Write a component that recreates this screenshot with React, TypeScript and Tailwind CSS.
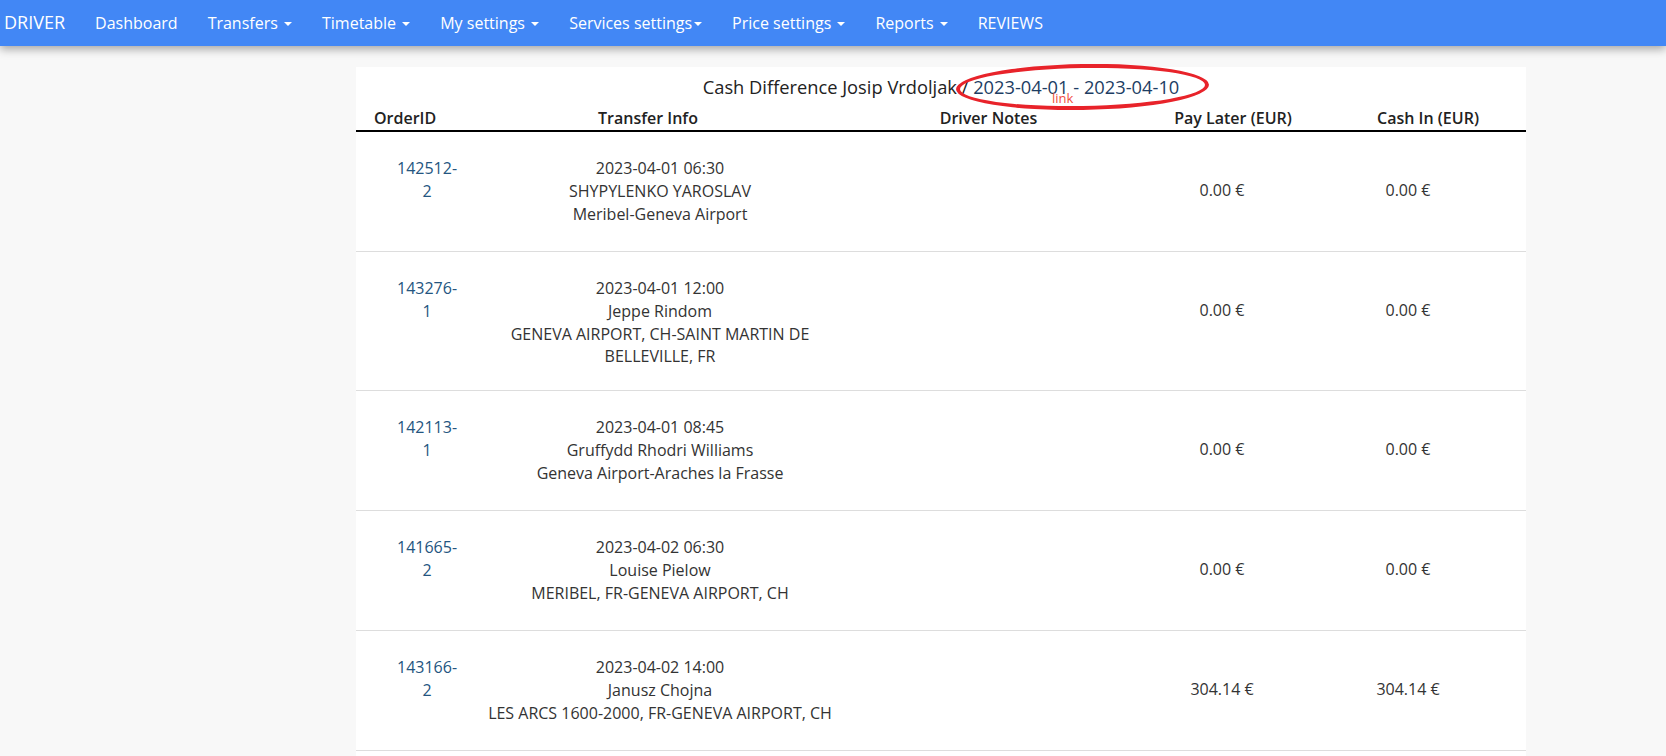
import React from "react";

interface NavItem {
    label: string;
    caret?: boolean;
    tight?: boolean;
}

interface TransferRow {
    id: string;
    part: string;
    date: string;
    name: string;
    route: string;
    payLater: string;
    cashIn: string;
}

const navItems: NavItem[] = [
    { label: "Dashboard" },
    { label: "Transfers", caret: true },
    { label: "Timetable", caret: true },
    { label: "My settings", caret: true },
    { label: "Services settings", caret: true, tight: true },
    { label: "Price settings", caret: true },
    { label: "Reports", caret: true },
    { label: "REVIEWS" },
];

const rows: TransferRow[] = [
    { id: "142512", part: "2", date: "2023-04-01 06:30", name: "SHYPYLENKO YAROSLAV", route: "Meribel-Geneva Airport", payLater: "0.00 €", cashIn: "0.00 €" },
    { id: "143276", part: "1", date: "2023-04-01 12:00", name: "Jeppe Rindom", route: "GENEVA AIRPORT, CH-SAINT MARTIN DE BELLEVILLE, FR", payLater: "0.00 €", cashIn: "0.00 €" },
    { id: "142113", part: "1", date: "2023-04-01 08:45", name: "Gruffydd Rhodri Williams", route: "Geneva Airport-Araches la Frasse", payLater: "0.00 €", cashIn: "0.00 €" },
    { id: "141665", part: "2", date: "2023-04-02 06:30", name: "Louise Pielow", route: "MERIBEL, FR-GENEVA AIRPORT, CH", payLater: "0.00 €", cashIn: "0.00 €" },
    { id: "143166", part: "2", date: "2023-04-02 14:00", name: "Janusz Chojna", route: "LES ARCS 1600-2000, FR-GENEVA AIRPORT, CH", payLater: "304.14 €", cashIn: "304.14 €" },
];

const Caret = () => (
    <span className="ml-[2px] inline-block h-0 w-0 border-x-4 border-t-4 border-x-transparent border-t-white align-middle" />
);

const Navbar = () => (
    <nav className="relative z-10 flex h-[46px] items-center bg-[#4287f5] text-[16px] text-white shadow-[0_3px_9px_rgba(0,0,0,0.35)]">
        <a className="pl-[4px] pr-[15px] text-[18px]">DRIVER</a>
        {navItems.map((item) => (
            <a key={item.label} className="px-[15px] whitespace-nowrap">
                {item.label}
                {item.caret && !item.tight && " "}
                {item.caret && <Caret />}
            </a>
        ))}
    </nav>
);

const Row = ({ row }: { row: TransferRow }) => (
    <div className="grid min-h-[120px] grid-cols-[119px_370px_287px_180px_192px] border-b border-[#dddddd]">
        <div className="pt-[25px] pb-[22px]">
            <a className="ml-[41px] block w-min text-center text-[#245580]">
                {row.id}-<wbr />
                {row.part}
            </a>
        </div>
        <div className="pt-[25px] pb-[22px] text-center">
            <div>{row.date}</div>
            <div>{row.name}</div>
            <div>{row.route}</div>
        </div>
        <div />
        <div className="pt-[47px] text-center">{row.payLater}</div>
        <div className="pt-[47px] text-center">{row.cashIn}</div>
    </div>
);

export default function App() {
    return (
        <div className="min-h-screen bg-[#f8f8f8] font-['Open_Sans',sans-serif] text-[16px] leading-[1.428571] text-[#333]">
            <Navbar />
            <div className="pt-[21px]">
                <div className="relative ml-[356px] w-[1170px] bg-white pb-[20px]">
                    <h2 className="pt-[7px] text-center text-[18.3px] leading-[25px] text-[#222]">
                        Cash Difference Josip Vrdoljak / <a className="text-[#1d3d63]">2023-04-01 - 2023-04-10</a>
                    </h2>
                    <div className="mt-[8px] grid grid-cols-[119px_370px_287px_180px_192px] border-b-2 border-black font-semibold text-[#222]">
                        <div className="pl-[18px]">OrderID</div>
                        <div className="pr-[24px] text-center">Transfer Info</div>
                        <div className="text-center">Driver Notes</div>
                        <div className="pl-[22px] text-center">Pay Later (EUR)</div>
                        <div className="pl-[40px] text-center">Cash In (EUR)</div>
                    </div>
                    {rows.map((row) => (
                        <Row key={row.id} row={row} />
                    ))}
                    {/* annotation */}
                    <div className="pointer-events-none absolute left-[600px] top-[-3px] h-[46px] w-[253px] -rotate-1 rounded-[50%] border-[4px] border-[#e8232a]" />
                    <span className="pointer-events-none absolute left-[696px] top-[23px] text-[13px] leading-[16px] text-[#f04e3e]">link</span>
                </div>
            </div>
        </div>
    );
}
